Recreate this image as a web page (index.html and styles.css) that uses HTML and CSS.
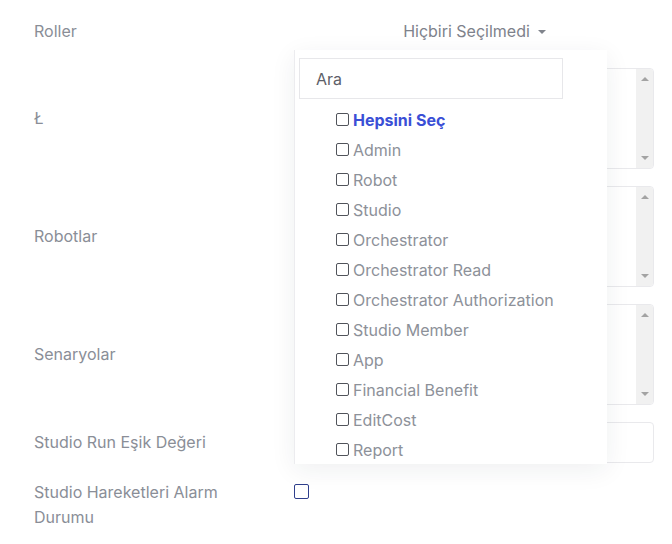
FILE: index.html
```html
<!DOCTYPE html>
<html lang="tr">
<head>
  <meta charset="UTF-8" />
  <meta name="viewport" content="width=device-width, initial-scale=1.0"/>
  <title>Kullanıcı</title>
  <link rel="stylesheet" href="styles.css">
</head>
<body>
  <div class="form">
    <label class="form-label">Roller</label>
    <div class="field dropdown">
      <button class="dropdown-toggle">Hiçbiri Seçilmedi <span class="caret"></span></button>
      <div class="dropdown-menu">
        <input class="search" type="text" placeholder="Ara" />
        <ul class="options">
          <li class="select-all"><span class="box"></span>Hepsini Seç</li>
          <li><span class="box"></span>Admin</li>
          <li><span class="box"></span>Robot</li>
          <li><span class="box"></span>Studio</li>
          <li><span class="box"></span>Orchestrator</li>
          <li><span class="box"></span>Orchestrator Read</li>
          <li><span class="box"></span>Orchestrator Authorization</li>
          <li><span class="box"></span>Studio Member</li>
          <li><span class="box"></span>App</li>
          <li><span class="box"></span>Financial Benefit</li>
          <li><span class="box"></span>EditCost</li>
          <li><span class="box"></span>Report</li>
        </ul>
      </div>
    </div>

    <label class="form-label">Ł</label>
    <div class="field listbox">
      <div class="scroll"><span class="arrow up"></span><span class="arrow down"></span></div>
    </div>

    <label class="form-label">Robotlar</label>
    <div class="field listbox">
      <div class="scroll"><span class="arrow up"></span><span class="arrow down"></span></div>
    </div>

    <label class="form-label">Senaryolar</label>
    <div class="field listbox">
      <div class="scroll"><span class="arrow up"></span><span class="arrow down"></span></div>
    </div>

    <label class="form-label">Studio Run Eşik Değeri</label>
    <div class="field">
      <input class="text-input" type="text" />
    </div>

    <label class="form-label top">Studio Hareketleri Alarm Durumu</label>
    <div class="field top">
      <span class="check"></span>
    </div>
  </div>
</body>
</html>
```

FILE: styles.css
```css
body {
  margin: 0;
  background: #fff;
  font-family: Inter, "Noto Sans", sans-serif;
  font-size: 16px;
  color: #8a8e97;
}

.form {
  display: grid;
  grid-template-columns: 261px 359px;
  row-gap: 17px;
  padding: 11px 0 0 34px;
}

.form-label {
  align-self: center;
  line-height: 25px;
  padding-right: 50px;
}

.form-label.top,
.field.top {
  align-self: start;
}

.field {
  position: relative;
}

/* roller dropdown */
.dropdown-toggle {
  width: 100%;
  height: 40px;
  border: none;
  background: transparent;
  font: inherit;
  color: #7e828b;
  display: flex;
  align-items: center;
  justify-content: center;
  gap: 8px;
  padding: 0;
}

.caret {
  width: 0;
  height: 0;
  border-left: 4px solid transparent;
  border-right: 4px solid transparent;
  border-top: 4px solid #80848c;
  margin-top: 1px;
}

.dropdown-menu {
  position: absolute;
  top: 39px;
  left: -1px;
  width: 313px;
  height: 414px;
  background: #fff;
  border-left: 1px solid #ececef;
  box-shadow: 0 6px 24px rgba(30, 40, 60, 0.07);
  z-index: 2;
  padding-top: 8px;
  box-sizing: border-box;
}

.search {
  display: block;
  width: 264px;
  height: 41px;
  margin-left: 4px;
  box-sizing: border-box;
  border: 1px solid #e7e7ea;
  padding: 0 16px;
  font: inherit;
  color: #555;
  outline: none;
}

.search::placeholder {
  color: #5d6068;
}

.options {
  list-style: none;
  margin: 6px 0 0;
  padding: 0 0 0 41px;
}

.options li {
  height: 30px;
  display: flex;
  align-items: center;
  gap: 4px;
  color: #8d9199;
}

.options .box {
  width: 11px;
  height: 11px;
  border: 1px solid #50535a;
  border-radius: 2px;
  margin-top: -1px;
}

.options .select-all {
  color: #3a4fd6;
  font-weight: 700;
}

/* list boxes */
.listbox {
  height: 101px;
  border: 1px solid #e9e9ec;
  border-radius: 4px;
  box-sizing: border-box;
  display: flex;
  justify-content: flex-end;
}

.scroll {
  width: 17px;
  background: #f1f1f1;
  border-radius: 0 3px 3px 0;
  display: flex;
  flex-direction: column;
  justify-content: space-between;
  align-items: center;
  padding: 8px 0;
}

.arrow {
  width: 0;
  height: 0;
  border-left: 4px solid transparent;
  border-right: 4px solid transparent;
}

.arrow.up {
  border-bottom: 4px solid #a3a3a3;
}

.arrow.down {
  border-top: 4px solid #a3a3a3;
}

.text-input {
  display: block;
  width: 100%;
  height: 41px;
  box-sizing: border-box;
  border: 1px solid #e9e9ec;
  border-radius: 4px;
  outline: none;
}

.check {
  display: block;
  width: 13px;
  height: 13px;
  border: 1.5px solid #2f3f8c;
  border-radius: 2px;
  margin: 4px 0 0 -1px;
}
```
